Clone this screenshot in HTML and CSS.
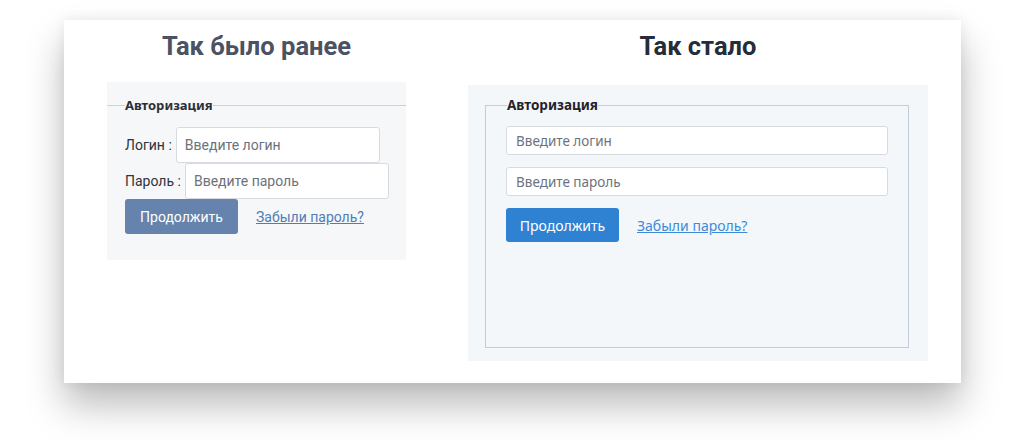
FILE: index.html
```html
<!DOCTYPE html>
<html>

<head>
    <title>Авторизация: было и стало</title>
    <meta charset="utf-8">
    <meta name="viewport" content="width=device-width, initial-scale=1.0">
    <link rel="stylesheet" href="styles.css">
</head>

<body>
    <main class="kort">

        <section class="kolonne">
            <h1 class="titel gammel_titel">Так было ранее</h1>
            <article class="gammel">
                <fieldset>
                    <legend>Авторизация</legend>
                    <div class="linje">
                        <label>Логин :</label>
                        <input type="text" placeholder="Введите логин">
                    </div>
                    <div class="linje">
                        <label>Пароль :</label>
                        <input type="password" placeholder="Введите пароль">
                    </div>
                    <div class="knapper">
                        <button>Продолжить</button>
                        <a href="#">Забыли пароль?</a>
                    </div>
                </fieldset>
            </article>
        </section>

        <section class="kolonne">
            <h1 class="titel">Так стало</h1>
            <article class="ny">
                <fieldset>
                    <legend>Авторизация</legend>
                    <input type="text" placeholder="Введите логин">
                    <input type="password" placeholder="Введите пароль">
                    <div class="knapper">
                        <button>Продолжить</button>
                        <a href="#">Забыли пароль?</a>
                    </div>
                </fieldset>
            </article>
        </section>

    </main>
</body></html>
```

FILE: styles.css
```css
body {
    margin: 0;
    padding-bottom: 58px;
    background-color: #ffffff;
}

.kort {
    box-sizing: border-box;
    width: 897px;
    height: 363px;
    margin: 20px 0 0 64px;
    padding: 12px 33px 0 43px;
    background-color: #ffffff;
    box-shadow: 0 22px 36px rgba(0, 0, 0, 0.27), 0 0 12px rgba(0, 0, 0, 0.07);
    display: grid;
    grid-template-columns: 299px 460px;
    column-gap: 62px;
    align-items: start;
}

.titel {
    margin: 0 0 25px;
    text-align: center;
    font-family: Roboto, sans-serif;
    font-weight: 700;
    font-size: 25.5px;
    line-height: 28px;
    color: #262d3a;
}

.gammel_titel {
    margin-bottom: 22px;
    color: #4b5263;
}

fieldset {
    margin: 0;
    min-width: 0;
}

legend {
    padding: 0;
    font-family: "Noto Sans", "Open Sans", sans-serif;
    font-weight: 700;
    font-size: 13px;
    color: #2b2f36;
}

input {
    box-sizing: border-box;
    margin: 0;
    background-color: #ffffff;
    border: 1px solid #d6dbe2;
    border-radius: 3px;
    outline: none;
}

button {
    box-sizing: border-box;
    width: 113px;
    border: none;
    border-radius: 3px;
    color: #ffffff;
    font-size: 14px;
    cursor: pointer;
}

.knapper {
    display: flex;
    align-items: center;
    gap: 18px;
}

.knapper a {
    font-size: 14px;
}

/* gammel version */

.gammel {
    background-color: #f6f7f9;
    padding: 14px 0 26px;
    font-family: Roboto, sans-serif;
}

.gammel fieldset {
    border: 0;
    border-top: 1px solid #cdd2da;
    padding: 13px 18px 0;
}

.gammel .linje {
    display: flex;
    align-items: center;
    gap: 4px;
}

.gammel label {
    flex: none;
    white-space: nowrap;
    font-size: 14px;
    color: #2f333a;
}

.gammel input {
    flex: none;
    width: 204px;
    height: 36px;
    padding: 0 8px;
    font-family: Roboto, sans-serif;
    font-size: 14px;
}

.gammel input::placeholder {
    color: #6c727c;
}

.gammel button {
    height: 35px;
    background-color: #6583ac;
    font-family: Roboto, sans-serif;
}

.gammel a {
    color: #4f7db5;
}

/* ny version */

.ny {
    box-sizing: border-box;
    height: 276px;
    margin-top: 3px;
    padding: 11px 19px 13px 17px;
    background-color: #f4f7fa;
    font-family: "Noto Sans", "Open Sans", sans-serif;
}

.ny fieldset {
    box-sizing: border-box;
    height: 100%;
    border: 1px solid #c3cdda;
    padding: 12px 20px 0;
}

.ny legend {
    margin-left: 1px;
    font-size: 13.5px;
    color: #1f232a;
}

.ny input {
    display: block;
    width: 100%;
    height: 29px;
    margin-bottom: 12px;
    padding: 0 9px;
    font-family: "Noto Sans", "Open Sans", sans-serif;
    font-size: 13.5px;
}

.ny input::placeholder {
    color: #6b737e;
}

.ny .knapper {
    margin-top: 2px;
}

.ny button {
    height: 34px;
    background-color: #2f81d2;
    font-family: "Noto Sans", "Open Sans", sans-serif;
}

.ny a {
    color: #3d8ad9;
}
```
